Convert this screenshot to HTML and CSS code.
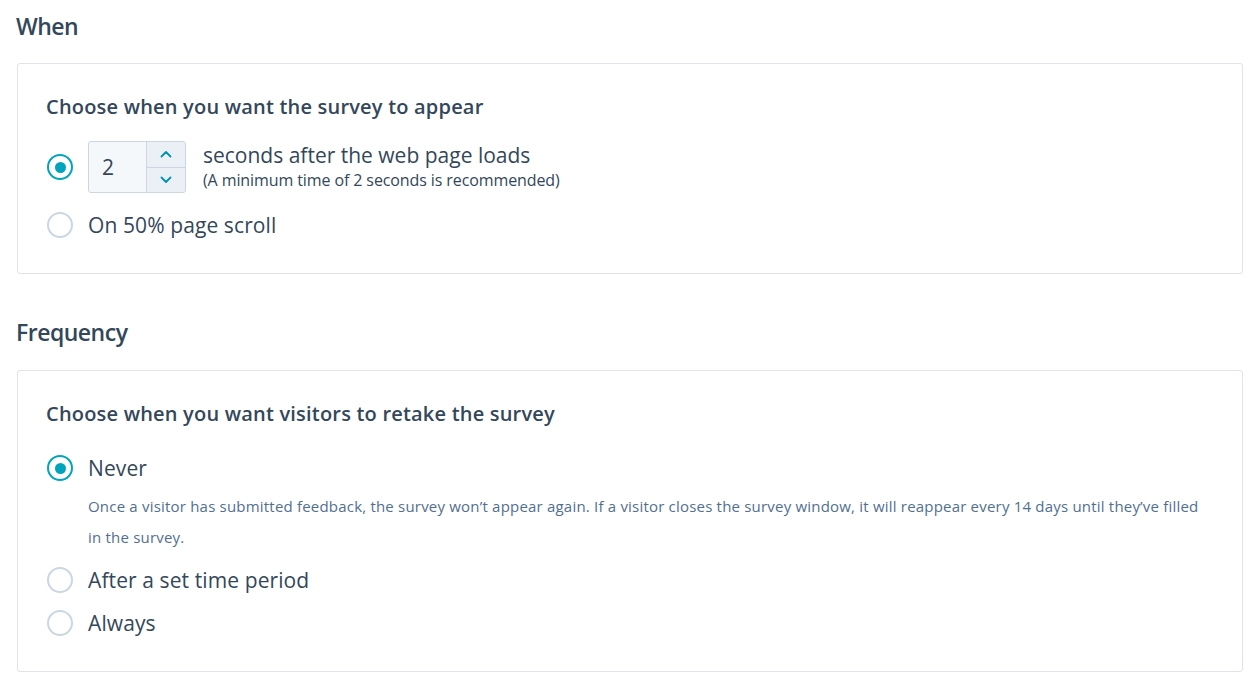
FILE: index.html
```html
<!DOCTYPE html>
<html>
<head>
  <meta charset="utf-8">
  <title>Survey settings</title>
  <link rel="stylesheet" href="styles.css">
</head>
<body>
  <div class="page">
    <!-- When -->
    <h2 class="section-title">When</h2>
    <div class="card">
      <h3 class="card-title">Choose when you want the survey to appear</h3>

      <div class="option option-delay">
        <span class="radio checked"></span>
        <div class="number-input">
          <span class="number-value">2</span>
          <div class="stepper">
            <span class="step">
              <svg width="12" height="8" viewBox="0 0 12 8"><path d="M1.5 6.5 L6 2 L10.5 6.5" fill="none" stroke="#0091ae" stroke-width="1.8" stroke-linecap="round" stroke-linejoin="round"/></svg>
            </span>
            <span class="step">
              <svg width="12" height="8" viewBox="0 0 12 8"><path d="M1.5 1.5 L6 6 L10.5 1.5" fill="none" stroke="#0091ae" stroke-width="1.8" stroke-linecap="round" stroke-linejoin="round"/></svg>
            </span>
          </div>
        </div>
        <div class="delay-text">
          <div class="delay-label">seconds after the web page loads</div>
          <div class="delay-hint">(A minimum time of 2 seconds is recommended)</div>
        </div>
      </div>

      <div class="option option-scroll">
        <span class="radio"></span>
        <span class="option-label">On 50% page scroll</span>
      </div>
    </div>

    <!-- Frequency -->
    <h2 class="section-title section-title-second">Frequency</h2>
    <div class="card">
      <h3 class="card-title">Choose when you want visitors to retake the survey</h3>

      <div class="option option-first">
        <span class="radio checked"></span>
        <span class="option-label">Never</span>
      </div>
      <p class="option-help">Once a visitor has submitted feedback, the survey won’t appear again. If a visitor closes the survey window, it will reappear every 14 days until they’ve filled in the survey.</p>

      <div class="option option-next">
        <span class="radio"></span>
        <span class="option-label">After a set time period</span>
      </div>
      <div class="option option-last">
        <span class="radio"></span>
        <span class="option-label">Always</span>
      </div>
    </div>
  </div>
</body>
</html>
```

FILE: styles.css
```css
body {
  margin: 0;
  background: white;
  font-family: "Open Sans", Lato, "Liberation Sans", sans-serif;
  color: #33475b;
}

.page {
  width: 1226px;
  padding: 10px 0 0 17px;
}

.section-title {
  margin: 0 0 21px -1px;
  font-size: 23px;
  line-height: 32px;
  font-weight: 600;
  letter-spacing: -0.5px;
  color: #33475b;
}

.section-title-second {
  margin-top: 42px;
  margin-bottom: 22px;
}

.card {
  border: 1px solid #dfe3eb;
  border-radius: 3px;
  padding: 31px 29px 33px 29px;
}

.card-title {
  margin: 0 0 0 -1px;
  font-size: 20px;
  line-height: 24px;
  font-weight: 600;
  letter-spacing: 0.2px;
  color: #33475b;
}

.option {
  display: flex;
  align-items: center;
}

.radio {
  flex: none;
  width: 22px;
  height: 22px;
  border: 2px solid #cbd6e2;
  border-radius: 50%;
  background: white;
  position: relative;
  margin-right: 15px;
}

.radio.checked {
  border-color: #00a4bd;
}

.radio.checked::after {
  content: "";
  position: absolute;
  left: 5.5px;
  top: 5.5px;
  width: 11px;
  height: 11px;
  border-radius: 50%;
  background: #00a4bd;
}

.option-label {
  font-size: 21px;
  line-height: 30px;
  letter-spacing: 0.1px;
}

.option-delay {
  margin-top: 22px;
}

.number-input {
  display: flex;
  width: 96px;
  height: 50px;
  border: 1px solid #cbd6e2;
  border-radius: 3px;
  background: #f5f8fa;
  margin-right: 17px;
}

.number-value {
  flex: 1;
  padding-left: 13px;
  font-size: 21px;
  line-height: 50px;
}

.stepper {
  width: 38px;
  display: flex;
  flex-direction: column;
  border-left: 1px solid #cbd6e2;
  background: #eaf0f6;
  border-radius: 0 3px 3px 0;
}

.step {
  flex: 1;
  display: flex;
  align-items: center;
  justify-content: center;
}

.step + .step {
  border-top: 1px solid #cbd6e2;
}

.delay-text {
  align-self: flex-start;
}

.delay-label {
  font-size: 21px;
  line-height: 28px;
}

.delay-hint {
  font-size: 16px;
  line-height: 22px;
  letter-spacing: -0.1px;
}

.option-scroll {
  margin-top: 17px;
}

.option-first {
  margin-top: 27px;
}

.option-help {
  margin: 8px 0 0 41px;
  font-size: 15px;
  line-height: 31px;
  letter-spacing: 0.2px;
  color: #516f90;
}

.option-next {
  margin-top: 12px;
}

.option-last {
  margin-top: 13px;
}
```
